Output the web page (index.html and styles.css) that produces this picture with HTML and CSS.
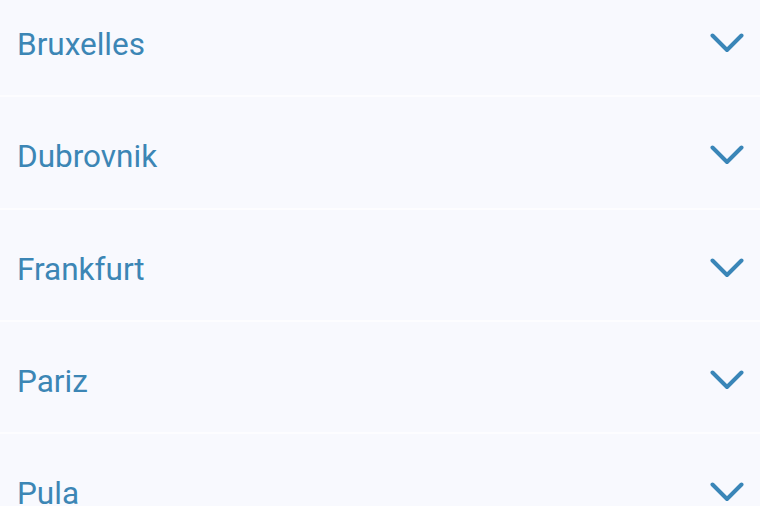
FILE: index.html
```html
<!DOCTYPE html>
<html>
<head>
<meta charset="utf-8">
<link rel="stylesheet" href="styles.css">
</head>
<body>
<ul class="list">
  <li class="row"><span class="name">Bruxelles</span><svg class="chev" viewBox="0 0 34 22"><path d="M2.5 2.5 L17 17 L31.5 2.5"/></svg></li>
  <li class="row"><span class="name">Dubrovnik</span><svg class="chev" viewBox="0 0 34 22"><path d="M2.5 2.5 L17 17 L31.5 2.5"/></svg></li>
  <li class="row"><span class="name">Frankfurt</span><svg class="chev" viewBox="0 0 34 22"><path d="M2.5 2.5 L17 17 L31.5 2.5"/></svg></li>
  <li class="row"><span class="name">Pariz</span><svg class="chev" viewBox="0 0 34 22"><path d="M2.5 2.5 L17 17 L31.5 2.5"/></svg></li>
  <li class="row"><span class="name">Pula</span><svg class="chev" viewBox="0 0 34 22"><path d="M2.5 2.5 L17 17 L31.5 2.5"/></svg></li>
</ul>
</body>
</html>
```
FILE: styles.css
```css
html, body {
  margin: 0;
  padding: 0;
  background: #f8f9fe;
  overflow: hidden;
}
body {
  width: 760px;
  height: 506px;
  font-family: Roboto, "Liberation Sans", sans-serif;
}
.list {
  list-style: none;
  margin: -15px 0 0 0;
  padding: 0;
}
.row {
  height: 110.25px;
  border-bottom: 2px solid #fdfdff;
  display: flex;
  align-items: flex-start;
  justify-content: space-between;
  padding-left: 17px;
  padding-right: 16px;
}
.name {
  margin-top: 42px;
  font-size: 31.5px;
  line-height: 36px;
  color: #3c86b5;
}
.chev {
  margin-top: 48px;
  width: 34px;
  height: 22px;
  fill: none;
  stroke: #3a86b8;
  stroke-width: 4;
  stroke-linecap: round;
  stroke-linejoin: round;
}
```
